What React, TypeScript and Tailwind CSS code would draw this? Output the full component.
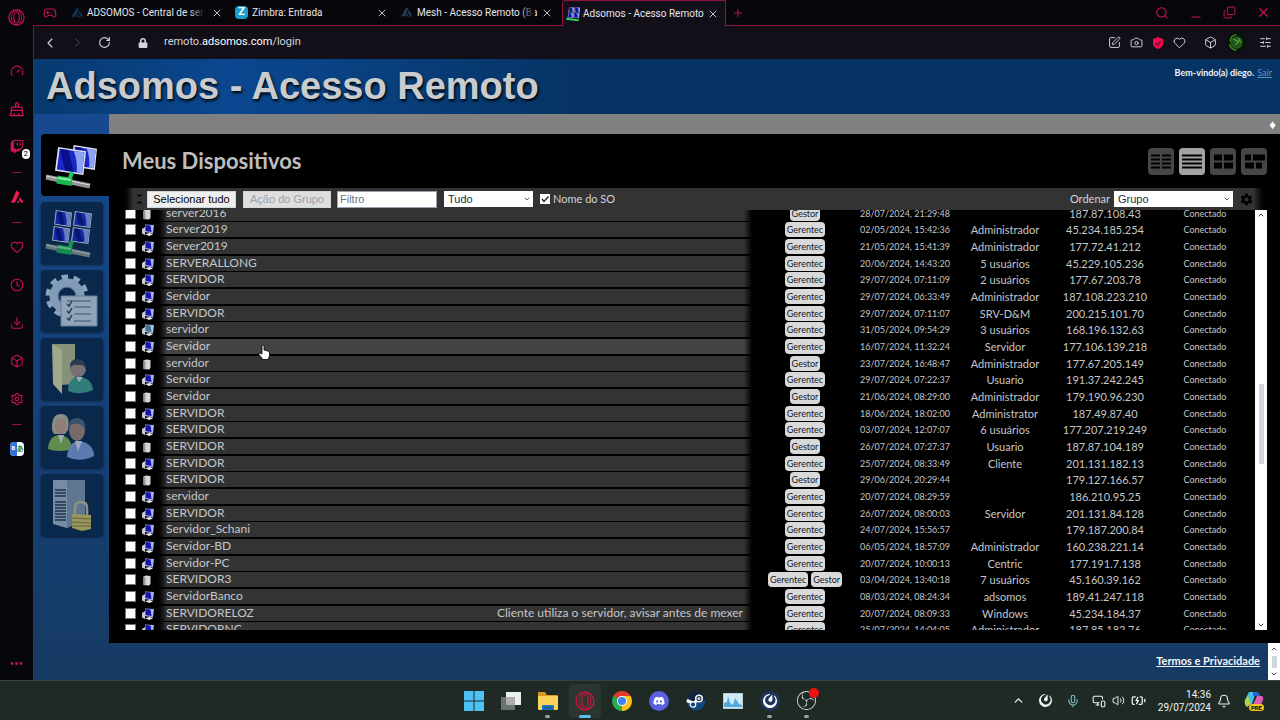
import React, { useState } from 'react';
import {
  BatteryCharging,
  Bell,
  Box,
  Camera,
  ChevronDown,
  ChevronLeft,
  ChevronRight,
  ChevronUp,
  Clock,
  Copy,
  Download,
  Ellipsis,
  Gamepad2,
  Gauge,
  Heart,
  Mic,
  Minus,
  MonitorSmartphone,
  Plus,
  RotateCw,
  Search,
  Settings,
  SlidersHorizontal,
  SquarePen,
  Volume2,
  X,
} from 'lucide-react';
import { FaDiscord, FaLock, FaTwitch } from 'react-icons/fa';
import { IoSettingsSharp } from 'react-icons/io5';
import { SiMattermost, SiObsstudio } from 'react-icons/si';

type DeviceKind = 'pc' | 'server' | 'vm';

interface Device {
  name: string;
  kind: DeviceKind;
  tags: string[];
  time: string;
  user: string;
  ip: string;
  note?: string;
}

const G = ['Gerentec'];
const S = ['Gestor'];

const devices: Device[] = [
  { name: 'server2016', kind: 'server', tags: S, time: '28/07/2024, 21:29:48', user: '', ip: '187.87.108.43' },
  { name: 'Server2019', kind: 'pc', tags: G, time: '02/05/2024, 15:42:36', user: 'Administrador', ip: '45.234.185.254' },
  { name: 'Server2019', kind: 'pc', tags: G, time: '21/05/2024, 15:41:39', user: 'Administrador', ip: '177.72.41.212' },
  { name: 'SERVERALLONG', kind: 'pc', tags: G, time: '20/06/2024, 14:43:20', user: '5 usuários', ip: '45.229.105.236' },
  { name: 'SERVIDOR', kind: 'pc', tags: G, time: '29/07/2024, 07:11:09', user: '2 usuários', ip: '177.67.203.78' },
  { name: 'Servidor', kind: 'pc', tags: G, time: '29/07/2024, 06:33:49', user: 'Administrador', ip: '187.108.223.210' },
  { name: 'SERVIDOR', kind: 'pc', tags: G, time: '29/07/2024, 07:11:07', user: 'SRV-D&M', ip: '200.215.101.70' },
  { name: 'servidor', kind: 'vm', tags: G, time: '31/05/2024, 09:54:29', user: '3 usuários', ip: '168.196.132.63' },
  { name: 'Servidor', kind: 'pc', tags: G, time: '16/07/2024, 11:32:24', user: 'Servidor', ip: '177.106.139.218' },
  { name: 'servidor', kind: 'server', tags: S, time: '23/07/2024, 16:48:47', user: 'Administrador', ip: '177.67.205.149' },
  { name: 'Servidor', kind: 'pc', tags: G, time: '29/07/2024, 07:22:37', user: 'Usuario', ip: '191.37.242.245' },
  { name: 'Servidor', kind: 'server', tags: S, time: '21/06/2024, 08:29:00', user: 'Administrador', ip: '179.190.96.230' },
  { name: 'SERVIDOR', kind: 'pc', tags: G, time: '18/06/2024, 18:02:00', user: 'Administrator', ip: '187.49.87.40' },
  { name: 'SERVIDOR', kind: 'pc', tags: G, time: '03/07/2024, 12:07:07', user: '6 usuários', ip: '177.207.219.249' },
  { name: 'SERVIDOR', kind: 'server', tags: S, time: '26/07/2024, 07:27:37', user: 'Usuario', ip: '187.87.104.189' },
  { name: 'SERVIDOR', kind: 'pc', tags: G, time: '25/07/2024, 08:33:49', user: 'Cliente', ip: '201.131.182.13' },
  { name: 'SERVIDOR', kind: 'server', tags: S, time: '29/06/2024, 20:29:44', user: '', ip: '179.127.166.57' },
  { name: 'servidor', kind: 'pc', tags: G, time: '20/07/2024, 08:29:59', user: '', ip: '186.210.95.25' },
  { name: 'SERVIDOR', kind: 'pc', tags: G, time: '26/07/2024, 08:00:03', user: 'Servidor', ip: '201.131.84.128' },
  { name: 'Servidor_Schani', kind: 'pc', tags: G, time: '24/07/2024, 15:56:57', user: '', ip: '179.187.200.84' },
  { name: 'Servidor-BD', kind: 'pc', tags: G, time: '06/05/2024, 18:57:09', user: 'Administrador', ip: '160.238.221.14' },
  { name: 'Servidor-PC', kind: 'pc', tags: G, time: '20/07/2024, 10:00:13', user: 'Centric', ip: '177.191.7.138' },
  { name: 'SERVIDOR3', kind: 'server', tags: ['Gerentec', 'Gestor'], time: '03/04/2024, 13:40:18', user: '7 usuários', ip: '45.160.39.162' },
  { name: 'ServidorBanco', kind: 'pc', tags: G, time: '08/03/2024, 08:24:34', user: 'adsomos', ip: '189.41.247.118' },
  {
    name: 'SERVIDORELOZ',
    kind: 'pc',
    tags: G,
    time: '20/07/2024, 08:09:33',
    user: 'Windows',
    ip: '45.234.184.37',
    note: 'Cliente utiliza o servidor, avisar antes de mexer',
  },
  { name: 'SERVIDORNC', kind: 'pc', tags: G, time: '25/07/2024, 14:04:05', user: 'Administrador', ip: '187.85.182.76' },
];

const OperaLogo = ({ size }: { size: number }) => (
  <svg width={size} height={size} viewBox="0 0 20 20" fill="none" stroke="currentColor">
    <circle cx="10" cy="10" r="9" strokeWidth="1.4" />
    <ellipse cx="10" cy="10" rx="6" ry="8.5" strokeWidth="1" />
    <ellipse cx="10" cy="10" rx="3.2" ry="6.4" strokeWidth="1.3" />
  </svg>
);

const BroomIcon = () => (
  <svg width="15" height="15" viewBox="0 0 16 16" fill="none" stroke="currentColor" strokeWidth="1.3">
    <path d="M7 5.500V2.500a1.500 1.500 0 0 1 3 0v3M2.500 9V6.500q0-1 1-1h9.500q1 0 1 1V9zM2.500 9L1.500 14.500h13.500L14 9M5.500 14.500v-2.500M10.500 14.500v-2.500" />
  </svg>
);

const AdsomosMark = ({ size, color }: { size: number; color: string }) => (
  <svg width={size} height={size} viewBox="0 0 16 16" fill={color}>
    <path d="M8 1.500L10 3L6.500 12.500Q4 11.500 1 13.500z" />
    <path d="M10.500 5Q14.500 9 15 13.500Q12.500 12.500 11.500 10.500Q10.500 8.500 9.500 8z" />
    <path d="M8.500 9L12 14L8 12z" />
  </svg>
);

const DeviceIcon = ({ kind }: { kind: DeviceKind }) => {
  if (kind === 'server') {
    return (
      <svg className="block" width="14" height="14" viewBox="0 0 14 14">
        <path d="M2.500 3.500L5 2.500L9.500 3V11L8 12.500L2.500 12z" fill="#d8d8d8" />
        <path d="M2.500 3.500L4.500 4V12.300L2.500 12z" fill="#9a9a9a" />
      </svg>
    );
  }
  return (
    <svg className="block" width="14" height="14" viewBox="0 0 14 14">
      <path d="M1 6L4 4V12L1 10.500z" fill="#c9cbd6" />
      <path d="M4 1.500L13 2L12 10.500L4 9z" fill={kind === 'vm' ? '#a9c6dc' : '#aab2e6'} />
      <path d="M4.500 2L9.500 2.500L10.500 9L4.500 8z" fill={kind === 'vm' ? '#3f7193' : '#1414ae'} />
      <path d="M4 11L9 10L12 11.500L8 13z" fill="#e8e8ee" />
    </svg>
  );
};

const Screen = ({ x, y, w, h }: { x: number; y: number; w: number; h: number }) => (
  <g transform={`translate(${x} ${y}) scale(${w / 30} ${h / 27})`}>
    <path d="M3 0L30 4L27.500 27L0 23z" fill="#dfe3f4" />
    <path d="M4.500 1.800L28.500 5.300L26.200 25.200L1.800 21.700z" fill="#1b28c8" />
    <path d="M18 3.800L28.500 5.300L26.200 25.200L21 24.400Q22 13 18 3.800z" fill="#8ea4f2" />
    <path d="M4.500 1.800L13 3L18 24L10 22.800z" fill="#0b0f88" />
  </g>
);

const Cable = ({ y }: { y: number }) => (
  <g transform={`translate(0 ${y})`}>
    <path d="M31 -4L28 5" stroke="#22c75c" strokeWidth="4" />
    <path d="M5 1L49 10" stroke="#8d9590" strokeWidth="5" />
    <path d="M5 0L49 9" stroke="#d6dcd8" strokeWidth="1" />
    <path d="M16 3.500L31 6" stroke="#18b94c" strokeWidth="8" />
    <path d="M17 2L30 4" stroke="#8af0a6" strokeWidth="2" />
  </g>
);

const DevicesArt = () => (
  <svg className="block" width="62" height="62" viewBox="0 0 62 62" fill="none">
    <Screen x={30} y={11} w={26} h={25} />
    <Screen x={14} y={13} w={31} h={28} />
    <Cable y={42} />
  </svg>
);

const NetworkArt = () => (
  <svg className="block" width="62" height="62" viewBox="0 0 62 62" fill="none">
    <Screen x={13} y={8} w={18} h={17} />
    <Screen x={32} y={9} w={19} h={17} />
    <Screen x={11} y={24} w={18} h={17} />
    <Screen x={30} y={25} w={19} h={17} />
    <Cable y={43} />
  </svg>
);

const AccountArt = () => (
  <svg className="block" width="62" height="62" viewBox="0 0 62 62" fill="none">
    <circle cx="26" cy="26" r="18.500" stroke="#c4d8ec" strokeWidth="6" strokeDasharray="6.300 5.324" />
    <circle cx="26" cy="26" r="13" stroke="#b5cde6" strokeWidth="9" />
    <circle cx="26" cy="26" r="9" stroke="#6f8cab" strokeWidth="1" />
    <path d="M20 26H56V56H20z" fill="#c9d8e6" stroke="#8fa6bd" />
    <path d="M26 34l2 2 3-5M26 41l2 2 3-5M26 48l2 2 3-5" stroke="#243f5e" strokeWidth="1.400" />
    <path d="M26 31h24M33 37h17M33 44h17M33 51h17" stroke="#4b6682" />
  </svg>
);

const FilesArt = () => (
  <svg className="block" width="62" height="62" viewBox="0 0 62 62" fill="none">
    <path d="M12 6H34V46L20 47z" fill="#b8c08a" />
    <path d="M11 6L21 12V56L12 46z" fill="#dfe0a4" />
    <path d="M27 53Q27 39 38 39Q51 40 52 52Q40 58 27 53z" fill="#3fa08f" />
    <path d="M35 39L38 44L42 39z" fill="#dce8ea" />
    <circle cx="37" cy="31" r="8" fill="#a88f86" />
    <path d="M29 30Q28 21 37 21Q46 22 45 32Q43 26 37 27Q32 26 29 30z" fill="#3a4654" />
  </svg>
);

const UsersArt = () => (
  <svg className="block" width="62" height="62" viewBox="0 0 62 62" fill="none">
    <path d="M11 24Q10 8 20 8Q30 8 27 24L24 28H13z" fill="#b9bd9a" />
    <ellipse cx="20" cy="20" rx="6" ry="8" fill="#caa28e" />
    <path d="M7 43Q8 29 19 29Q30 30 31 43Q18 47 7 43z" fill="#86b84f" />
    <path d="M17 29L20 38L23 29z" fill="#dfe8e0" />
    <ellipse cx="36" cy="24" rx="8" ry="11" fill="#a98777" />
    <path d="M28 22Q27 12 36 12Q46 13 44 26Q43 18 36 18Q30 17 28 22z" fill="#51647c" />
    <path d="M26 51Q27 35 39 35Q53 38 53 50Q39 57 26 51z" fill="#7f9fdb" />
    <path d="M34 35L37 45L41 35z" fill="#d9e2f4" />
  </svg>
);

const ServerArt = () => (
  <svg className="block" width="62" height="62" viewBox="0 0 62 62" fill="none">
    <path d="M12 6L44 6V46L26 54L12 50z" fill="#a3b8ca" />
    <path d="M26 6L44 6V46L26 54z" fill="#8298ae" />
    <path d="M14 16h11M14 19h11M14 22h11M14 28h11M14 31h11M14 34h11M14 37h11M14 40h11M14 43h11M14 46h11" stroke="#24384e" strokeWidth="1.500" />
    <path d="M34 41V34Q34 28 40 28Q46 28 46 34V42" stroke="#c4c29a" strokeWidth="2.500" />
    <path d="M31 40L50 41V55L41 57L31 54z" fill="#d6c765" />
    <path d="M31 44L50 45M31 48L50 49M31 52L50 52" stroke="#8f8234" />
  </svg>
);

const navItems = [
  { label: 'Meus Dispositivos', Art: DevicesArt },
  { label: 'Rede', Art: NetworkArt },
  { label: 'Minha Conta', Art: AccountArt },
  { label: 'Meus Arquivos', Art: FilesArt },
  { label: 'Meus Usuários', Art: UsersArt },
  { label: 'Meu Servidor', Art: ServerArt },
];

const SideButton = ({ label, children }: { label: string; children: React.ReactNode }) => (
  <button type="button" aria-label={label} className="relative flex h-[38px] w-full items-center justify-center">
    {children}
  </button>
);

const SideDivider = () => (
  <div className="flex h-3 w-full items-center justify-center">
    <span className="h-px w-[10px] bg-[#a00f3c]" />
  </div>
);

const BrowserSidebar = () => (
  <aside className="flex w-[33px] shrink-0 flex-col items-center bg-[#07060b] text-[#cf1450]">
    <button type="button" aria-label="Opera" className="flex h-[34px] items-center">
      <OperaLogo size={17} />
    </button>
    <div className="mt-[18px] w-full">
      <SideButton label="GX Control"><Gauge size={14} strokeWidth={1.8} /></SideButton>
      <SideButton label="GX Cleaner"><BroomIcon /></SideButton>
      <SideButton label="Twitch">
        <FaTwitch size={14} />
        <span className="absolute right-[3px] bottom-[7px] rounded-sm bg-white px-[2px] text-[8px] leading-[10px] text-black">2</span>
      </SideButton>
      <SideDivider />
      <SideButton label="Aria">
        <svg width="16" height="16" viewBox="0 0 16 16" fill="#ee1c50">
          <path d="M7.500 1.500L10.500 4L6 13.500L2 14z" />
          <path d="M10.500 8L14.500 12.500L13 14L10 11.500z" />
          <path d="M8.500 11L10.500 13.500L8 14z" />
        </svg>
      </SideButton>
      <SideDivider />
      <SideButton label="Favoritos"><Heart size={14} strokeWidth={1.8} /></SideButton>
      <SideButton label="Histórico"><Clock size={14} strokeWidth={1.8} /></SideButton>
      <SideButton label="Downloads"><Download size={14} strokeWidth={1.8} /></SideButton>
      <SideButton label="Extensões"><Box size={14} strokeWidth={1.8} /></SideButton>
      <SideButton label="Configurações"><Settings size={14} strokeWidth={1.8} /></SideButton>
      <SideDivider />
      <SideButton label="Tradutor">
        <span className="flex size-[14px] overflow-hidden rounded-sm bg-white text-[7px] leading-[13px] font-bold">
          <span className="w-[7px] bg-[#3273d8] text-center text-white">a</span>
          <span className="w-[7px] font-['Noto_Sans_CJK_JP',sans-serif] text-[#2b8a3e]">あ</span>
        </span>
      </SideButton>
    </div>
    <button type="button" aria-label="Mais" className="mt-auto flex h-[34px] items-center">
      <Ellipsis size={15} strokeWidth={2.5} />
    </button>
  </aside>
);

interface TabProps {
  title: string;
  icon: React.ReactNode;
  active?: boolean;
  faded?: boolean;
}

const BrowserTab = ({ title, icon, active, faded }: TabProps) => (
  <div
    className={
      active
        ? 'flex w-[164px] items-center rounded-tl border border-b-0 border-[#8f1240] bg-[#120f19] pr-1 pl-[3px]'
        : 'flex w-[165px] items-center border-b border-[#8f1240] pr-[7px] pl-[3px]'
    }
  >
    <span className="flex w-[17px] shrink-0">{icon}</span>
    <span className="relative min-w-0 flex-1 text-[10px] whitespace-nowrap text-gray-200">
      {title}
      {faded && <span className="absolute inset-y-0 right-1 w-4 bg-linear-to-r from-transparent to-[#07060b]" />}
    </span>
    <button type="button" aria-label="Fechar aba" className="flex w-4 shrink-0 justify-center text-gray-300">
      <X size={12} strokeWidth={1.8} />
    </button>
  </div>
);

const TabStrip = () => (
  <div className="flex h-[26px] shrink-0 bg-[#07060b]">
    <div className="flex w-[34px] items-center justify-center border-b border-[#8f1240] text-[#cf1450]">
      <Gamepad2 size={14} strokeWidth={1.8} />
    </div>
    <BrowserTab faded title="ADSOMOS - Central de ser" icon={<AdsomosMark size={14} color="#0d3350" />} />
    <BrowserTab
      title="Zimbra: Entrada"
      icon={<span className="flex size-[13px] items-center justify-center rounded-sm bg-[#1c9fcd] text-[11px] font-bold text-white">Z</span>}
    />
    <BrowserTab faded title="Mesh - Acesso Remoto (Ba" icon={<AdsomosMark size={13} color="#22405c" />} />
    <BrowserTab
      active
      title="Adsomos - Acesso Remoto"
      icon={
        <svg width="14" height="14" viewBox="4 6 50 50" fill="none">
          <Screen x={13} y={6} w={21} h={20} />
          <Screen x={34} y={6} w={21} h={20} />
          <Screen x={10} y={26} w={21} h={20} />
          <Screen x={31} y={26} w={21} h={20} />
          <path d="M5 48L50 54" stroke="#2ed563" strokeWidth="7" />
        </svg>
      }
    />
    <div className="flex flex-1 items-center border-b border-[#8f1240] pl-[6px] text-[#cf1450]">
      <button type="button" aria-label="Nova aba"><Plus size={12} strokeWidth={1.8} /></button>
      <div className="ml-auto flex items-center gap-5 pr-[9px]">
        <button type="button" aria-label="Buscar abas"><Search size={14} strokeWidth={1.8} /></button>
        <button type="button" aria-label="Minimizar" className="pt-2"><Minus size={14} strokeWidth={1.8} /></button>
        <button type="button" aria-label="Restaurar"><Copy className="-scale-y-100" size={13} strokeWidth={1.8} /></button>
        <button type="button" aria-label="Fechar"><X size={15} strokeWidth={1.8} /></button>
      </div>
    </div>
  </div>
);

const AddressBar = () => (
  <div className="flex h-[33px] shrink-0 items-center bg-[#120f19] pr-2 pl-2 text-gray-300">
    <button type="button" aria-label="Voltar"><ChevronLeft size={16} strokeWidth={1.6} /></button>
    <button type="button" aria-label="Avançar" className="ml-3 text-gray-600"><ChevronRight size={15} strokeWidth={1.6} /></button>
    <button type="button" aria-label="Recarregar" className="ml-[13px]"><RotateCw size={13} strokeWidth={2} /></button>
    <FaLock className="ml-[27px]" size={10} />
    <span className="ml-4 text-[11px] text-gray-300">
      remoto.<span className="text-white">adsomos.com</span>/login
    </span>
    <div className="ml-auto flex items-center gap-[9px]">
      <button type="button" aria-label="Editar"><SquarePen size={13} strokeWidth={1.8} /></button>
      <button type="button" aria-label="Capturar"><Camera size={13} strokeWidth={1.8} /></button>
      <button type="button" aria-label="Proteção">
        <svg width="12" height="12" viewBox="0 0 12 12" fill="none">
          <path d="M6 0L11 2V7Q11 10 6 12Q1 10 1 7V2z" fill="#ee0b52" />
          <path d="M3.500 6l2 2 3-3.500" stroke="#6b0a2b" strokeWidth="1.200" />
        </svg>
      </button>
      <button type="button" aria-label="Favoritar"><Heart size={13} strokeWidth={1.8} /></button>
      <button type="button" aria-label="Extensões" className="ml-[9px]"><Box size={13} strokeWidth={1.8} /></button>
      <button type="button" aria-label="Perfil">
        <svg className="block rounded-full" width="21" height="21" viewBox="0 0 20 20" fill="none">
          <circle cx="10" cy="10" r="10" fill="#06120a" />
          <circle cx="10" cy="10" r="6" fill="#1f5a1c" />
          <path d="M4 9Q4 3 10 2.500M3 12Q5 17 10 17.500" stroke="#4c8f20" strokeWidth="1.200" />
          <path d="M7 7L12 9L9 12M12 6L14 10" stroke="#5fa83a" strokeWidth="1" />
        </svg>
      </button>
      <button type="button" aria-label="Opções" className="ml-[3px]"><SlidersHorizontal size={13} strokeWidth={1.8} /></button>
    </div>
  </div>
);

const views = ['colunas', 'lista', 'blocos', 'áreas'];

const viewShapes = [
  <path d="M3 6h9v2H3zM14 6h9v2h-9zM3 10h9v2H3zM14 10h9v2h-9zM3 14h9v2H3zM14 14h9v2h-9zM3 18h9v2H3zM14 18h9v2h-9z" />,
  <path d="M3 6h20v2H3zM3 10h20v2H3zM3 14h20v2H3zM3 18h20v2H3z" />,
  <path d="M4 6h8v6H4zM14 6h9v6h-9zM4 14h8v6H4zM14 14h9v6h-9z" />,
  <path d="M4 6h6v6H4zM12 6h12v6H12zM4 14h9v6H4zM15 14h6v6h-6z" />,
];

const ViewSwitch = () => {
  const [view, setView] = useState(1);
  return (
    <div className="flex gap-[5px]">
      {views.map((label, i) => (
        <button
          key={label}
          type="button"
          aria-label={`Exibir em ${label}`}
          onClick={() => setView(i)}
          className={`rounded-sm ${view === i ? 'bg-[#a3a3a3]' : 'bg-[#464646]'}`}
        >
          <svg className="block" width="26" height="27" viewBox="0 0 26 26">{viewShapes[i]}</svg>
        </button>
      ))}
    </div>
  );
};

interface SelectBoxProps {
  id: string;
  options: string[];
  className: string;
}

const SelectBox = ({ id, options, className }: SelectBoxProps) => (
  <div className={`relative ${className}`}>
    <select
      id={id}
      aria-label={id}
      className="block h-4 w-full appearance-none bg-white pl-1 font-['Liberation_Sans',sans-serif] text-[11px] leading-4 text-gray-800"
    >
      {options.map((option) => (
        <option key={option}>{option}</option>
      ))}
    </select>
    <ChevronDown className="pointer-events-none absolute top-1 right-[2px] text-gray-700" size={8} strokeWidth={2.5} />
  </div>
);

const Toolbar = () => (
  <div className="flex h-[22px] shrink-0 items-center bg-linear-to-r from-black via-[#333] via-1% to-[#333] text-[11px] text-gray-300">
    <span className="flex w-[25px] flex-col items-center pl-[10px] text-black">
      <ChevronDown size={7} strokeWidth={4} />
      <ChevronUp size={7} strokeWidth={4} />
    </span>
    <button type="button" className="h-[17px] w-[89px] border border-gray-300 bg-[#efefef] font-['Liberation_Sans',sans-serif] text-[11px] leading-[15px] text-black">
      Selecionar tudo
    </button>
    <button
      type="button"
      disabled
      className="ml-[7px] h-[17px] w-[88px] border border-gray-300 bg-[#dedede] font-['Liberation_Sans',sans-serif] text-[11px] leading-[15px] text-gray-400"
    >
      Ação do Grupo
    </button>
    <input
      type="text"
      aria-label="Filtro"
      placeholder="Filtro"
      className="ml-[6px] h-[17px] w-[100px] border border-gray-400 bg-white px-[2px] font-['Liberation_Sans',sans-serif] text-[11px] text-black placeholder:text-gray-500"
    />
    <SelectBox id="Mostrar" options={['Tudo', 'Online', 'Offline']} className="ml-[7px] w-[89px]" />
    <label className="ml-[7px] flex items-center gap-[3px]">
      <span className="relative block size-[10px]">
        <input type="checkbox" defaultChecked className="peer block size-[10px] appearance-none bg-white" />
        <svg className="pointer-events-none absolute inset-0 hidden peer-checked:block" width="10" height="10" viewBox="0 0 10 10" fill="none">
          <path d="M2 5l2 2.500L8.500 2.500" stroke="#222" strokeWidth="1.400" />
        </svg>
      </span>
      Nome do SO
    </label>
    <div className="ml-auto flex items-center">
      <label htmlFor="Ordenar" className="mr-1">Ordenar</label>
      <SelectBox id="Ordenar" options={['Grupo', 'Nome', 'Energia']} className="w-[119px]" />
    </div>
    <div className="flex h-full w-[34px] items-center bg-linear-to-r from-[#333] via-[#333] via-60% to-black pl-[7px] text-black">
      <button type="button" aria-label="Colunas"><IoSettingsSharp size={13} /></button>
    </div>
  </div>
);

const DeviceRow = ({ device }: { device: Device }) => (
  <tr className="group h-[17px] align-top nth-[3n+1]:h-4">
    <td className="pt-[2px] pl-[3px]">
      <input type="checkbox" aria-label={device.name} className="block size-[11px] appearance-none border border-gray-500 bg-white checked:bg-blue-600" />
    </td>
    <td className="pt-px">
      <DeviceIcon kind={device.kind} />
    </td>
    <td className="pr-[3px]">
      <div className="flex h-[15px] justify-between bg-linear-to-r from-black via-[#333] via-2% to-[#333] pl-[11px] text-[12px] leading-[13px] group-hover:via-[#444] group-hover:to-[#444] group-nth-9:via-[#444] group-nth-9:to-[#444]">
        <span>{device.name}</span>
        <span className="flex">
          {device.note}
          <span className="ml-px h-[15px] w-2 bg-linear-to-r from-transparent to-black" />
        </span>
      </div>
    </td>
    <td>
      <div className="flex justify-center gap-[3px]">
        {device.tags.map((tag) => (
          <span key={tag} className="rounded bg-[#d9d9d9] px-[2px] text-[9px] leading-[15px] text-gray-900">{tag}</span>
        ))}
      </div>
    </td>
    <td className="text-center text-[9px] leading-4">{device.time}</td>
    <td className="text-center text-[11px] leading-4">{device.user}</td>
    <td className="text-center text-[11px] leading-4">{device.ip}</td>
    <td className="text-center text-[9px] leading-4">Conectado</td>
  </tr>
);

const DeviceList = () => (
  <div className="flex min-h-0 flex-1">
    <div className="min-w-0 flex-1 overflow-hidden">
      <table className="-mt-1 w-full table-fixed text-[#c4c7ca]">
        <colgroup>
          <col className="w-[19px]" />
          <col className="w-[14px]" />
          <col />
          <col className="w-[100px]" />
          <col className="w-[100px]" />
          <col className="w-[100px]" />
          <col className="w-[100px]" />
          <col className="w-[100px]" />
        </colgroup>
        <tbody>
          {devices.map((device) => (
            <DeviceRow key={device.time} device={device} />
          ))}
        </tbody>
      </table>
    </div>
    <div className="flex w-3 shrink-0 flex-col items-center bg-white py-px text-gray-700">
      <ChevronUp size={8} strokeWidth={3} />
      <span className="flex-[165]" />
      <span className="w-[5px] flex-[80] bg-gray-300" />
      <span className="flex-[157]" />
      <ChevronDown size={8} strokeWidth={3} />
    </div>
  </div>
);

const RemotePage = () => (
  <div className="flex min-h-0 flex-1 flex-col bg-linear-to-b from-[#164a93] to-[#153a63] font-[Lato,sans-serif]">
    <header className="flex h-[55px] shrink-0 justify-between bg-linear-to-r from-[#063a70] via-[#053363] via-40% to-[#053363]">
      <div className="bg-linear-to-r from-transparent via-[#0b4790] via-35% to-transparent pr-10 pl-3">
        <h1 className="font-['Liberation_Sans',sans-serif] text-[38px] leading-[55px] font-bold text-[#c9ccce] [text-shadow:1px_2px_3px_#000]">
          Adsomos - Acesso Remoto
        </h1>
      </div>
      <p className="pt-[7px] pr-2 text-[9px] font-bold text-gray-100">
        Bem-vindo(a) diego. <a href="#sair" className="ml-px font-normal text-[#5e8fc4] underline">Sair</a>
      </p>
    </header>
    <div className="flex min-h-0 flex-1">
      <nav className="flex w-[75px] shrink-0 flex-col gap-[6px] pt-5 pl-[7px]">
        {navItems.map(({ label, Art }, i) => (
          <a
            key={label}
            href="#nav"
            aria-label={label}
            className={i === 0 ? 'rounded-l bg-black' : 'w-[62px] rounded bg-[#0a274c] shadow-sm shadow-black/50'}
          >
            <div className={i === 0 ? '' : 'opacity-70'}>
              <Art />
            </div>
          </a>
        ))}
      </nav>
      <div className="flex min-w-0 flex-1 flex-col">
        <div className="flex h-5 shrink-0 items-center justify-end bg-[#808080] pr-1 text-[13px] leading-4 text-white">♦</div>
        <section className="flex min-h-0 flex-1 flex-col bg-black px-[13px] pb-[13px]">
          <div className="flex h-[54px] shrink-0 items-center justify-between">
            <h2 className="text-[22px] leading-6 font-bold text-[#bdbdbd]">Meus Dispositivos</h2>
            <ViewSwitch />
          </div>
          <Toolbar />
          <DeviceList />
        </section>
      </div>
    </div>
    <footer className="flex h-[37px] shrink-0 items-center justify-end">
      <a href="#termos" className="mr-2 text-[11px] font-bold text-gray-100 underline">Termos e Privacidade</a>
      <div className="flex h-full w-3 flex-col items-center justify-between bg-white py-[2px] text-gray-600">
        <ChevronUp size={8} strokeWidth={3} />
        <span className="h-3 w-[5px] bg-gray-300" />
        <ChevronDown size={8} strokeWidth={3} />
      </div>
    </footer>
  </div>
);

const WindowsLogo = () => (
  <svg width="20" height="20" viewBox="0 0 20 20" fill="#4cc2f5">
    <path d="M0 0h9.500v9.500H0zM10.500 0H20v9.500h-9.500zM0 10.500h9.500V20H0zM10.500 10.500H20V20h-9.500z" />
  </svg>
);

const TaskViewLogo = () => (
  <svg width="20" height="20" viewBox="0 0 20 20">
    <path d="M5 1h15v13H5z" fill="#eceeec" />
    <path d="M0 6h14v13H0z" fill="#6c736f" />
    <path d="M5 6h9v8H5z" fill="#a9aeab" />
  </svg>
);

const FolderLogo = () => (
  <svg width="20" height="20" viewBox="0 0 20 20">
    <path d="M0 2q0-1 1-1h6l2 3h10q1 0 1 1v5H0z" fill="#d9981f" />
    <path d="M0 5h20v13q0 1-1 1H1q-1 0-1-1z" fill="#fbd25a" />
    <path d="M4 19v-4q0-1 1-1h10q1 0 1 1v4z" fill="#1972b8" />
    <path d="M6 16.500h8v1H6z" fill="#0d4f86" />
  </svg>
);

const ChromeLogo = () => (
  <svg width="20" height="20" viewBox="0 0 20 20">
    <path d="M10 10L1.340 5A10 10 0 0 1 18.660 5z" fill="#e33b2e" />
    <path d="M10 10L18.660 5A10 10 0 0 1 10 20z" fill="#fbc116" />
    <path d="M10 10V20A10 10 0 0 1 1.340 5z" fill="#2da94f" />
    <path d="M10 5h8.660L14 12.500z" fill="#fbc116" />
    <path d="M10 15L5.700 12.500 1.340 5 6 7z" fill="#2da94f" />
    <circle cx="10" cy="10" r="5" fill="#fff" />
    <circle cx="10" cy="10" r="4" fill="#3b7ff0" />
  </svg>
);

const SteamLogo = () => (
  <svg width="20" height="20" viewBox="0 0 20 20" fill="none">
    <circle cx="10" cy="10" r="9.500" fill="#0f4a7c" />
    <path d="M1 7Q4 0.500 10 0.500Q19 1 19.500 9L10 12z" fill="#12233f" />
    <path d="M0.800 9.500L8 12.500L11 9" stroke="#f1f3f5" strokeWidth="3" />
    <circle cx="7" cy="13.500" r="2.700" fill="#0f3e6c" stroke="#f1f3f5" strokeWidth="1.300" />
    <circle cx="13" cy="7.500" r="3.300" fill="#12233f" stroke="#f1f3f5" strokeWidth="1.600" />
    <circle cx="13" cy="7.500" r="1.600" fill="#c9ced4" />
  </svg>
);

const MonitorLogo = () => (
  <svg width="20" height="16" viewBox="0 0 20 16">
    <path d="M0 0h20v16H0z" fill="#cfe9f5" />
    <path d="M1 14V10L4 9L5 3L7 10L10 12L12 5L14 8L16 11L19 12V14z" fill="#52a9d8" />
    <path d="M0 0h20v16H0z" fill="none" stroke="#9cb6c4" />
  </svg>
);

const taskbarApps = [
  { label: 'Iniciar', icon: <WindowsLogo />, mark: '' },
  { label: 'Visão de tarefas', icon: <TaskViewLogo />, mark: '' },
  { label: 'Explorador', icon: <FolderLogo />, mark: 'w-[5px] bg-gray-400' },
  { label: 'Opera', icon: <span className="text-[#c3173f]"><OperaLogo size={20} /></span>, mark: 'w-3 bg-[#5cc0e6]' },
  { label: 'Chrome', icon: <ChromeLogo />, mark: '' },
  {
    label: 'Discord',
    icon: <span className="flex size-5 items-center justify-center rounded-full bg-[#5961e0] text-white"><FaDiscord size={12} /></span>,
    mark: '',
  },
  { label: 'Steam', icon: <SteamLogo />, mark: '' },
  { label: 'Monitor', icon: <MonitorLogo />, mark: '' },
  {
    label: 'Mattermost',
    icon: <span className="flex size-5 items-center justify-center rounded-full bg-[#1f3560] text-white"><SiMattermost size={14} /></span>,
    mark: 'w-[5px] bg-gray-400',
  },
  {
    label: 'OBS',
    icon: (
      <span className="relative text-gray-300">
        <SiObsstudio size={19} />
        <span className="absolute -top-[3px] -right-[3px] size-[10px] rounded-full bg-[#f01010]" />
      </span>
    ),
    mark: 'w-[5px] bg-gray-400',
  },
];

const Taskbar = () => (
  <footer className="grid h-10 shrink-0 grid-cols-[1fr_auto_1fr] items-center border-t border-[#34463f] bg-[#1e2a23]">
    <span />
    <div className="flex gap-[5px]">
      {taskbarApps.map(({ label, icon, mark }) => (
        <button
          key={label}
          type="button"
          aria-label={label}
          className={`relative flex h-[34px] w-8 items-center justify-center rounded-sm ${label === 'Opera' ? 'bg-[#2b3631]' : ''}`}
        >
          {icon}
          {mark && <span className={`absolute bottom-0 h-[3px] rounded-full ${mark}`} />}
        </button>
      ))}
    </div>
    <div className="flex items-center justify-end pr-4 text-gray-100">
      <ChevronUp size={13} strokeWidth={2.4} />
      <SiMattermost className="ml-[14px]" size={13} />
      <Mic className="ml-[14px] text-[#7fc3cf]" size={14} strokeWidth={1.8} />
      <MonitorSmartphone className="ml-3" size={14} strokeWidth={1.8} />
      <Volume2 className="ml-[6px]" size={13} strokeWidth={1.8} />
      <BatteryCharging className="ml-[6px]" size={15} strokeWidth={2} />
      <div className="ml-3 text-right text-[10px] leading-[13px]">
        <div>14:36</div>
        <div>29/07/2024</div>
      </div>
      <Bell className="ml-[6px]" size={14} strokeWidth={1.8} />
      <span className="relative ml-[13px] flex">
        <svg width="20" height="20" viewBox="0 0 20 20">
          <path d="M5 1h7l-4 12H3Q0 13 1 9z" fill="#3fc0e8" />
          <path d="M9 1h4q2 0 3 4H9z" fill="#2a62d8" />
          <path d="M1 9l3-4 3 8-4 3Q0 14 1 9z" fill="#b7d247" />
          <path d="M13 5h4q3 0 2 4l-3 7H8z" fill="#e05fb4" />
        </svg>
        <span className="absolute right-0 bottom-0 rounded-sm bg-[#f5c62c] px-[2px] text-[6px] leading-[7px] font-bold text-black">PRE</span>
      </span>
    </div>
  </footer>
);

const Pointer = () => (
  <svg className="pointer-events-none absolute top-[344px] left-[258px]" width="12" height="16" viewBox="0 0 12 16">
    <path
      d="M4 1.500q1-1 2 0V6l4 1q1.500.500 1.500 2v3l-1.500 3.500H5L1 10.500q-.500-1.500 1-1.500L4 10z"
      fill="#fff"
      stroke="#000"
      strokeWidth=".8"
    />
  </svg>
);

export default function App() {
  return (
    <div className="relative flex h-screen flex-col overflow-hidden bg-black font-[Roboto,sans-serif]">
      <div className="flex min-h-0 flex-1">
        <BrowserSidebar />
        <main className="flex min-w-0 flex-1 flex-col">
          <TabStrip />
          <div className="flex min-h-0 flex-1 flex-col border-l border-[#6d1a4a]">
            <AddressBar />
            <RemotePage />
          </div>
        </main>
      </div>
      <Taskbar />
      <Pointer />
    </div>
  );
}
